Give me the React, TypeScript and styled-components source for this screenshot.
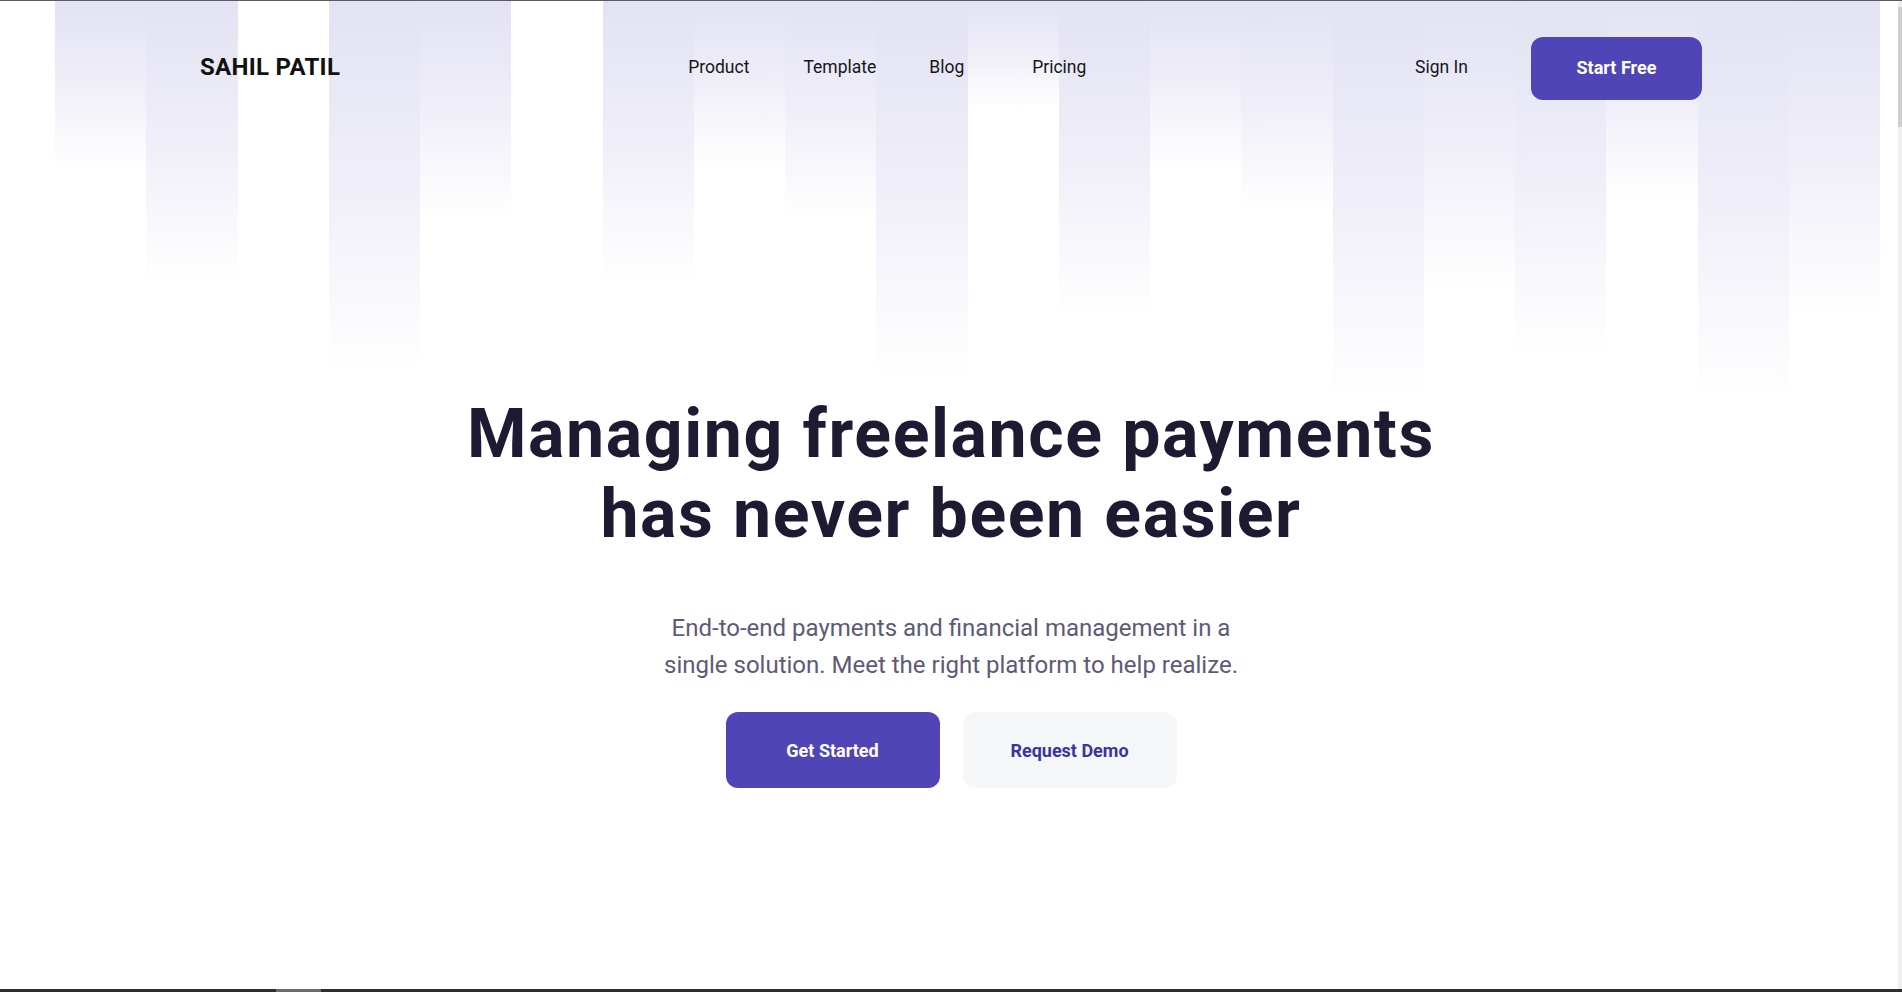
import styled, { createGlobalStyle } from "styled-components";

const GlobalStyle = createGlobalStyle`
  * {
    box-sizing: border-box;
  }
  body {
    margin: 0;
    background: #fff;
    font-family: Roboto, "Liberation Sans", sans-serif;
    color: #161616;
  }
`;

const Page = styled.div`
  position: relative;
  min-height: 100vh;
  border-top: 1px solid #5b5b5b;
  overflow: hidden;
`;

const Stripes = styled.div`
  position: absolute;
  top: 0;
  left: 55px;
  display: grid;
  grid-template-columns: repeat(20, 91.25px);
  align-items: start;
  z-index: 0;
`;

const Stripe = styled.div<{ $fade: number }>`
  height: ${(p) => p.$fade}px;
  background: ${(p) =>
    p.$fade
      ? "linear-gradient(to bottom, #e3e2f3 0%, #eeedf8 45%, rgba(255, 255, 255, 0) 100%)"
      : "transparent"};
`;

const Content = styled.div`
  position: relative;
  z-index: 1;
`;

const Header = styled.header`
  width: 1502px;
  margin: 0 auto;
  padding-top: 36px;
  display: flex;
  align-items: center;
`;

const Logo = styled.div`
  padding-bottom: 4px;
  font-size: 24px;
  font-weight: 700;
  color: #111;
  letter-spacing: 0.3px;
`;

const Nav = styled.nav`
  display: flex;
  align-items: center;
  margin-left: 348px;
  padding-bottom: 4px;
`;

const NavLink = styled.a<{ $gap?: number }>`
  margin-left: ${(p) => p.$gap ?? 0}px;
  font-size: 17.5px;
  color: #161616;
  text-decoration: none;
  cursor: pointer;
`;

const Actions = styled.div`
  display: flex;
  align-items: center;
  margin-left: auto;
  gap: 63px;

  & > a {
    padding-bottom: 4px;
  }
`;

const Button = styled.button<{ $variant?: "primary" | "ghost" }>`
  border: none;
  font-family: inherit;
  font-weight: 700;
  font-size: 18px;
  cursor: pointer;
  border-radius: 12px;
  background: ${(p) => (p.$variant === "ghost" ? "#f6f7f9" : "#4f45b6")};
  color: ${(p) => (p.$variant === "ghost" ? "#3a33a3" : "#fff")};
`;

const HeaderButton = styled(Button)`
  width: 171px;
  height: 63px;
  padding-bottom: 3px;
`;

const HeroButton = styled(Button)`
  width: 214px;
  height: 76px;
`;

const Hero = styled.section`
  display: flex;
  flex-direction: column;
  align-items: center;
  margin-top: 294px;
`;

const Title = styled.h1`
  margin: 0;
  font-size: 68px;
  line-height: 80px;
  font-weight: 700;
  letter-spacing: 1.6px;
  color: #1c1b31;
  text-align: center;
`;

const Subtitle = styled.p`
  margin: 56px 0 0;
  font-size: 24px;
  line-height: 37px;
  color: #5d5a77;
  text-align: center;
`;

const ButtonRow = styled.div`
  display: flex;
  gap: 23px;
  margin-top: 28px;
`;

const HScroll = styled.div`
  position: fixed;
  left: 0;
  right: 0;
  bottom: 0;
  height: 3px;
  background: #2e2e2e;
  z-index: 5;
`;

const HThumb = styled.div`
  margin-left: 276px;
  width: 45px;
  height: 100%;
  background: #6b6b6b;
`;

const VScroll = styled.div`
  position: fixed;
  top: 1px;
  right: 0;
  bottom: 3px;
  width: 4px;
  background: #efefef;
  z-index: 5;
`;

const VThumb = styled.div`
  margin-top: 6px;
  height: 120px;
  background: #cfcfcf;
`;

const stripes = [170, 283, 0, 370, 217, 0, 283, 167, 217, 377, 107, 318, 170, 210, 400, 290, 355, 200, 400, 317];

export default function App() {
  return (
    <>
      <GlobalStyle />
      <Page>
        <Stripes>
          {stripes.map((h, i) => (
            <Stripe key={i} $fade={h} />
          ))}
        </Stripes>
        <Content>
          <Header>
            <Logo>SAHIL PATIL</Logo>
            <Nav>
              <NavLink>Product</NavLink>
              <NavLink $gap={54}>Template</NavLink>
              <NavLink $gap={53}>Blog</NavLink>
              <NavLink $gap={68}>Pricing</NavLink>
            </Nav>
            <Actions>
              <NavLink>Sign In</NavLink>
              <HeaderButton>Start Free</HeaderButton>
            </Actions>
          </Header>
          <Hero>
            <Title>
              Managing freelance payments
              <br />
              has never been easier
            </Title>
            <Subtitle>
              End-to-end payments and financial management in a
              <br />
              single solution. Meet the right platform to help realize.
            </Subtitle>
            <ButtonRow>
              <HeroButton>Get Started</HeroButton>
              <HeroButton $variant="ghost">Request Demo</HeroButton>
            </ButtonRow>
          </Hero>
        </Content>
        <VScroll>
          <VThumb />
        </VScroll>
        <HScroll>
          <HThumb />
        </HScroll>
      </Page>
    </>
  );
}
